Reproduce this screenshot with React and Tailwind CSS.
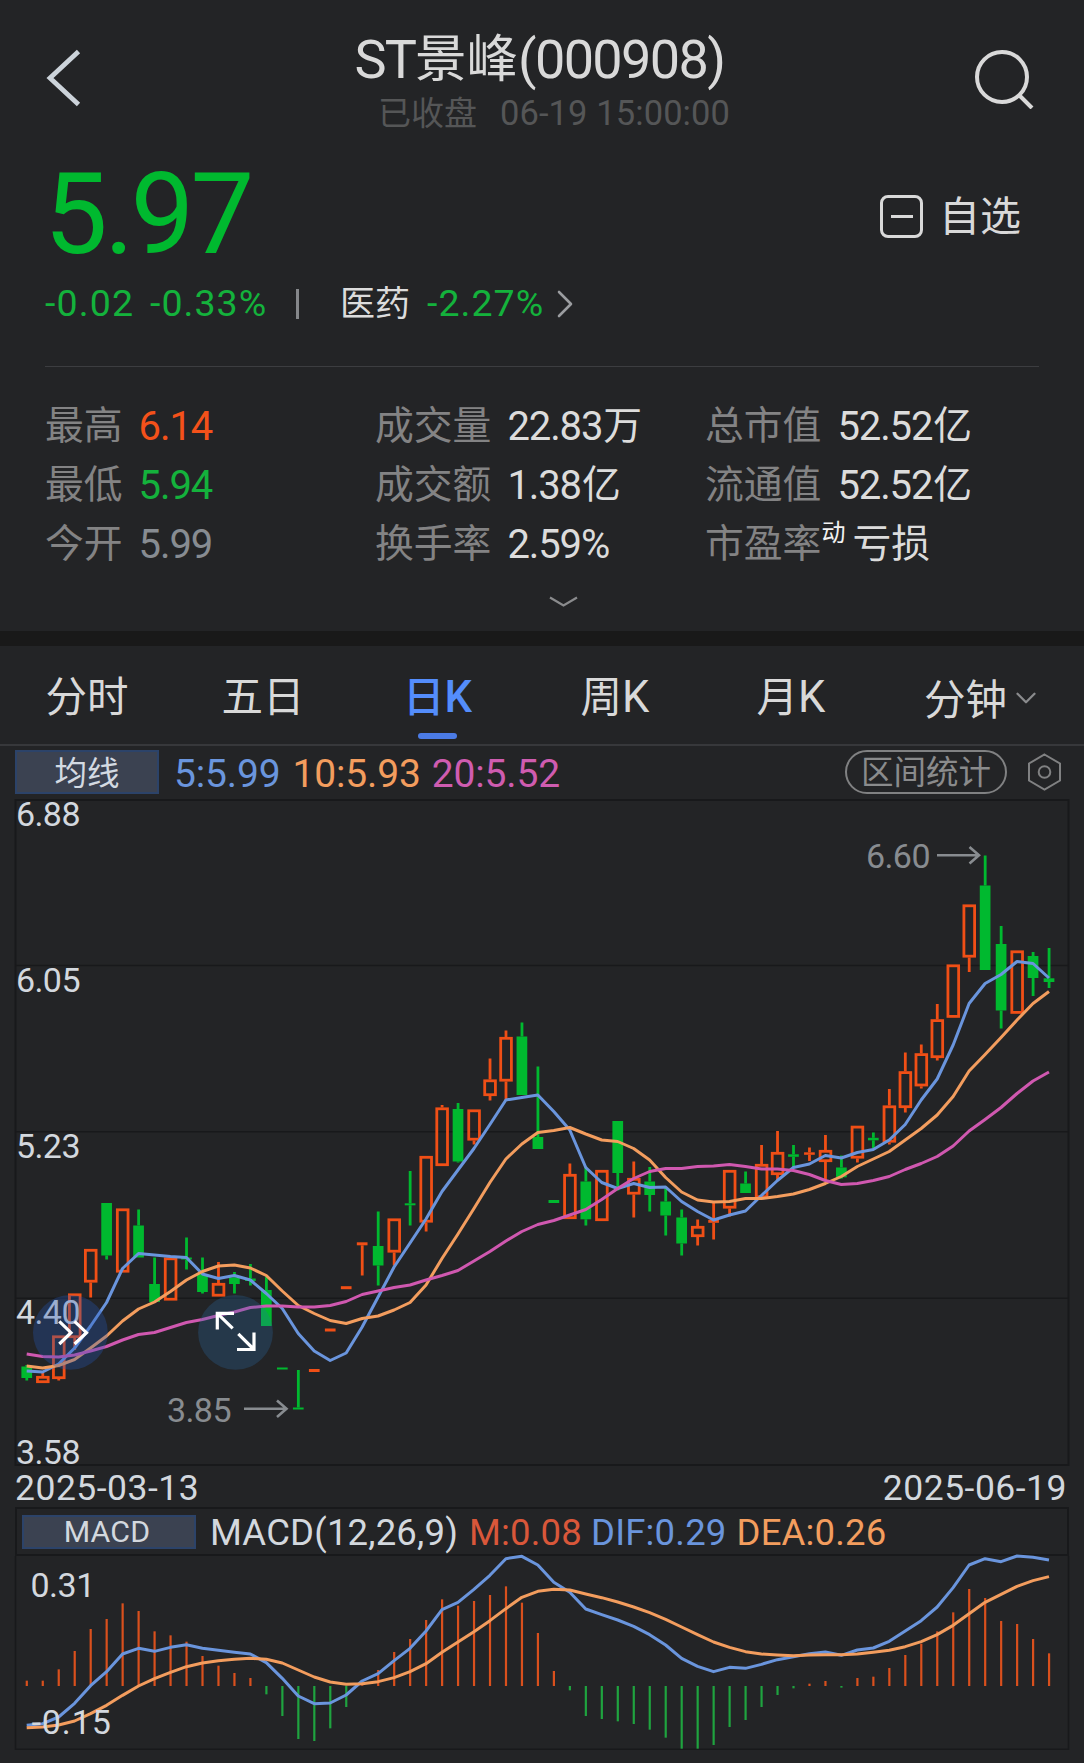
import { ChevronDown, ChevronRight } from "lucide-react";

const UP = "#f04f16";
const DOWN = "#00b92f";
const BLUE = "#6a95dd";
const ORANGE = "#f39d5e";
const PINK = "#d058b0";
const GRID = "#18191b";

// [direction, high, bodyTop, bodyBottom, low]
const candles = [
  ["d", 1365, 1366.5, 1378, 1380.5],
  ["u", 1373, 1376, 1383, 1383],
  ["u", 1335.5, 1335.5, 1379, 1380.5],
  ["u", 1293.5, 1293.5, 1338, 1350],
  ["u", 1249, 1249, 1282.5, 1297.5],
  ["d", 1203, 1203, 1255.5, 1259.5],
  ["u", 1208.5, 1208.5, 1272.5, 1272.5],
  ["d", 1209.5, 1225.5, 1257.5, 1257.5],
  ["d", 1257.5, 1284, 1302, 1302],
  ["u", 1257.5, 1257.5, 1300.5, 1300.5],
  ["d", 1237.5, 1257.5, 1259.5, 1269.5],
  ["d", 1257.5, 1274, 1292, 1293.5],
  ["u", 1262, 1283, 1296.5, 1296.5],
  ["d", 1272, 1277.5, 1284, 1293.5],
  ["d", 1264, 1278.5, 1281, 1285.5],
  ["d", 1276.5, 1290, 1326, 1326],
  ["d", 1367.5, 1367.5, 1369.5, 1369.5],
  ["d", 1370, 1407.5, 1409.5, 1409.5],
  ["u", 1369, 1369, 1372, 1372],
  ["u", 1328.5, 1328.5, 1331.5, 1331.5],
  ["u", 1286.2, 1286.2, 1289.2, 1289.2],
  ["u", 1242.3, 1242.3, 1245.3, 1275.5],
  ["d", 1211.5, 1246, 1265.5, 1285.5],
  ["u", 1218.5, 1218.5, 1252.5, 1265.5],
  ["d", 1171, 1203.3, 1205.3, 1225.5],
  ["u", 1156, 1156, 1222.5, 1231.5],
  ["u", 1105, 1107.5, 1166, 1166],
  ["d", 1103, 1109, 1161.5, 1162.5],
  ["u", 1109.5, 1109.5, 1140.5, 1144.5],
  ["u", 1058.5, 1079.5, 1096, 1100.5],
  ["u", 1030.5, 1037, 1081.5, 1100],
  ["d", 1022.5, 1036.5, 1095, 1095],
  ["d", 1066.5, 1137, 1149, 1149],
  ["d", 1200, 1200, 1203, 1203],
  ["u", 1163.5, 1174, 1219, 1219],
  ["d", 1166.5, 1181.5, 1219.3, 1225.5],
  ["u", 1170, 1170, 1221, 1221],
  ["d", 1121, 1121, 1173, 1190.5],
  ["u", 1161.5, 1178, 1194.5, 1217.5],
  ["d", 1167, 1181.5, 1195, 1211.5],
  ["d", 1187.5, 1201.5, 1215.5, 1235.5],
  ["d", 1209.5, 1217.5, 1243.5, 1255.5],
  ["u", 1219.5, 1226, 1237, 1245.5],
  ["u", 1202.5, 1219.8, 1222.8, 1239.5],
  ["u", 1170, 1170, 1208.5, 1216.5],
  ["d", 1171.5, 1183.5, 1193, 1193],
  ["u", 1145, 1164, 1198, 1198],
  ["u", 1131, 1152, 1175, 1180],
  ["d", 1145, 1154.3, 1156.8, 1168.5],
  ["u", 1147.5, 1152.3, 1154.8, 1161],
  ["u", 1135, 1150, 1162, 1181],
  ["d", 1155.5, 1167.5, 1177.3, 1178.5],
  ["u", 1125.8, 1125.8, 1158.5, 1162.5],
  ["d", 1132.5, 1137.8, 1140.3, 1148.5],
  ["u", 1089, 1105.5, 1142.5, 1144.5],
  ["u", 1052.5, 1071.3, 1108, 1112.5],
  ["u", 1044.5, 1053.3, 1086.3, 1088.5],
  ["u", 1004, 1019.3, 1058, 1060.5],
  ["u", 964.5, 964.5, 1017.7, 1017.7],
  ["u", 904.5, 904.5, 957.5, 972],
  ["d", 855.5, 885.5, 970, 970],
  ["d", 926, 944, 1010.5, 1028.5],
  ["u", 950.5, 950.5, 1013.7, 1013.7],
  ["d", 952, 956, 978, 996],
  ["d", 948, 978.3, 982, 988],
];

const ma5 = [
  1371, 1372, 1364, 1348, 1326, 1302.5, 1268.5, 1253.5, 1255, 1256.5, 1257.5,
  1274, 1278.5, 1275.5, 1280, 1293.5, 1308.5, 1333.5, 1351, 1360.5, 1353, 1327,
  1297, 1267, 1243, 1219, 1191.5, 1170, 1148.5, 1124.5, 1100, 1097.5, 1095,
  1111.5, 1130, 1167.5, 1182.5, 1188.5, 1183.5, 1187.5, 1187, 1201.5, 1211.5,
  1220, 1215, 1211, 1195.5, 1180.5, 1167.5, 1164, 1155.5, 1158, 1152.5, 1149.5,
  1140, 1124.5, 1100, 1079, 1045, 1003.5, 983.5, 974.5, 961.5, 963.5, 978,
];

const ma10 = [
  1366, 1368, 1365.5, 1359.5, 1348, 1336, 1321, 1309, 1302, 1291.5, 1280,
  1271.5, 1266, 1265, 1268, 1275.5, 1291, 1305.5, 1313.5, 1320.5, 1323.5,
  1318.5, 1316, 1310, 1302.5, 1285, 1258.5, 1234, 1208.5, 1182.5, 1159, 1144,
  1132.5, 1130.5, 1127.5, 1134, 1140, 1141.5, 1148.5, 1160, 1177.5, 1192, 1200,
  1202, 1201.5, 1198.5, 1198.5, 1196.5, 1194, 1189.5, 1183.5, 1176.5, 1166.5,
  1159, 1151.5, 1140, 1128.5, 1115, 1096.5, 1071, 1054.5, 1037.5, 1020, 1003.5,
  991.5,
];

const ma20 = [
  1354, 1356.5, 1357, 1355, 1351, 1346.5, 1340, 1334.5, 1332.5, 1327.5, 1322.5,
  1319.5, 1315.5, 1312, 1307.5, 1306, 1306, 1307, 1307, 1305.5, 1301.5, 1294.5,
  1291, 1287.5, 1285, 1280, 1275.5, 1270.5, 1261, 1251.5, 1241, 1231.5, 1224.5,
  1220.5, 1215, 1209.5, 1199.5, 1188.5, 1178.5, 1171.5, 1168.5, 1168.5, 1166.5,
  1166, 1164.5, 1166.5, 1169, 1169, 1170.5, 1174.5, 1180.5, 1184.5, 1183.5,
  1180.5, 1176.5, 1169.5, 1163.5, 1156.5, 1146, 1131, 1119.5, 1107.5, 1093.5,
  1081, 1072,
];

// MACD series are stored in thirds of a pixel
const ZERO = 678;
const bars = [
  662, 662, 628, 573, 507, 477, 430, 453, 514, 526, 545, 588, 617, 639, 654,
  703, 768, 837, 843, 805, 741, 676, 630, 576, 537, 480, 418, 437, 423, 405,
  379, 428, 519, 633, 691, 768, 777, 784, 792, 809, 833, 866, 866, 855, 801,
  780, 741, 705, 685, 671, 663, 683, 654, 650, 624, 585, 551, 514, 457, 387,
  414, 483, 492, 537, 580,
];

const dif = [
  796, 791, 771, 730, 677, 635, 582, 565, 574, 562, 554, 565, 571, 577, 582,
  608, 655, 708, 731, 729, 705, 663, 641, 602, 565, 513, 449, 427, 388, 346,
  296, 289, 315, 367, 397, 447, 464, 480, 499, 524, 555, 595, 619, 635, 622,
  625, 613, 599, 590, 581, 576, 586, 570, 564, 544, 513, 482, 441, 383, 315,
  296, 305, 288, 292, 300,
];

const dea = [
  803, 801, 795, 783, 761, 736, 706, 678, 656, 637, 620, 609, 602, 598, 595,
  598, 609, 630, 651, 666, 673, 671, 665, 653, 635, 611, 577, 546, 515, 482,
  446, 412, 394, 388, 390, 402, 413, 426, 441, 458, 478, 501, 524, 546, 562,
  575, 582, 585, 587, 585, 584, 584, 582, 577, 571, 560, 545, 524, 496, 461,
  427, 403, 379, 362, 350,
];

const stats = [
  { label: "最高", value: "6.14", color: "text-[#f4511a]" },
  { label: "成交量", value: "22.83", unit: "万" },
  { label: "总市值", value: "52.52", unit: "亿" },
  { label: "最低", value: "5.94", color: "text-[#14b23c]" },
  { label: "成交额", value: "1.38", unit: "亿" },
  { label: "流通值", value: "52.52", unit: "亿" },
  { label: "今开", value: "5.99", color: "text-[#878c92]" },
  { label: "换手率", value: "2.59%" },
  { label: "市盈率", sup: "动", unit: "亏损" },
];

const tabs = [
  { name: "分时" },
  { name: "五日" },
  { name: "日", latin: "K", active: true },
  { name: "周", latin: "K" },
  { name: "月", latin: "K" },
  { name: "分钟", more: true },
];

const px = (i) => 26.7 + 15.973 * i;
const line = (values) => values.map((y, i) => `${px(i)},${y}`).join(" ");
const macdY = (v) => 1460 + v / 3;

function Candle({ index, data }) {
  const [dir, high, top, bottom, low] = data;
  const x = px(index);
  const color = dir === "u" ? UP : DOWN;
  const hollow = dir === "u" && bottom - top > 4;

  return (
    <g fill={color} stroke="none">
      {high < top && <rect x={x - 1.3} y={high} width={2.8} height={top - high} />}
      {low > bottom && <rect x={x - 1.3} y={bottom} width={2.8} height={low - bottom} />}
      {hollow ? (
        <rect
          x={x - 5.2}
          y={top + 1.3}
          width={10.7}
          height={bottom - top - 2.6}
          fill="none"
          stroke={color}
          strokeWidth={2.8}
        />
      ) : (
        <rect x={x - 5.3} y={top} width={10.7} height={bottom - top} />
      )}
    </g>
  );
}

function Header() {
  return (
    <header className="grid h-[156px] grid-cols-[1fr_auto_1fr] items-center pr-[49px] pl-[44px]">
      <svg className="h-[60px] w-[40px]" viewBox="0 0 40 60" fill="none" stroke="#ccd3da" strokeWidth="4.8">
        <path d="M34.5 3.5 L6 30 L34.5 56.5" />
      </svg>
      <div className="flex h-full flex-col items-center pt-[30px]">
        <h1 className="flex h-[60px] items-center text-[51.5px] text-[#d9d9d9]">
          <span className="text-[54px] tracking-[-0.035em]">ST</span>景峰
          <span className="text-[54px] tracking-[-0.03em]">(000908)</span>
        </h1>
        <p className="ml-[29px] flex h-[46px] items-center text-[33px] text-[#555657]">
          已收盘
          <span className="ml-[23px] text-[34.5px] tracking-[0.003em]">06-19 15:00:00</span>
        </p>
      </div>
      <svg className="h-[62px] w-[62px] justify-self-end" viewBox="0 0 62 62" fill="none" stroke="#d9d9d9" strokeWidth="4">
        <circle cx="29" cy="30" r="25" />
        <path d="M46 48 L59 61" />
      </svg>
    </header>
  );
}

function Quote() {
  return (
    <section className="px-[45px]">
      <div className="flex h-[115px] items-center justify-between">
        <span className="mt-[3px] -ml-px text-[113.5px] leading-none tracking-[-0.032em] text-[#00b92f]">5.97</span>
        <div className="flex items-center pt-[5px] pr-[18px] text-[41px] leading-none text-[#d9d9d9]">
          <span className="mr-[16px] flex size-[43px] items-center justify-center rounded-[8px] border-[3px] border-[#d9d9d9]">
            <i className="h-[3px] w-[22px] bg-[#d9d9d9]" />
          </span>
          <span className="pt-[2px]">自选</span>
        </div>
      </div>
      <div className="flex h-[64px] items-center pt-[2px] text-[37.5px] text-[#14b23c]">
        <span className="w-[105px] tracking-[0.03em]">-0.02</span>
        <span className="w-[146px] tracking-[0.028em]">-0.33%</span>
        <i className="h-[30px] w-[3px] bg-[#85878a]" />
        <span className="ml-[41px] text-[35px] text-[#dcdcdc]">医药</span>
        <span className="ml-[17px] tracking-[0.028em]">-2.27%</span>
        <ChevronRight className="-ml-[3px] size-[48px] text-[#9b9da0]" strokeWidth={1.3} />
      </div>
      <div className="mt-[31px] border-t border-[#3c3d40]" />
      <div className="mt-[30px] mb-[-2px] grid grid-cols-[330px_330px_1fr]">
        {stats.map((item) => (
          <div key={item.label} className="flex h-[59px] items-center text-[38.8px] text-[#dcdcdc]">
            <span className="text-[#838384]">{item.label}</span>
            {item.sup && <sup className="top-[-12px] text-[24px] leading-none text-[#f2f2f2]">{item.sup}</sup>}
            {item.value && (
              <span className={`ml-[16px] text-[40px] tracking-[-0.028em] ${item.color || ""}`}>
                {item.value}
              </span>
            )}
            <span className={item.sup ? "ml-[7px]" : "ml-px"}>{item.unit}</span>
          </div>
        ))}
      </div>
      <div className="flex h-[59px] items-center justify-center pt-px">
        <svg className="ml-[43px] h-[12px] w-[29px]" viewBox="0 0 29 12" fill="none" stroke="#8a8b8d" strokeWidth="2.2">
          <path d="M1 1.5 L14.5 9.5 L28 1.5" />
        </svg>
      </div>
    </section>
  );
}

function Tabs() {
  return (
    <nav className="h-[100px] border-b-2 border-[#37383b]">
      <div className="-ml-px grid h-full w-[1056px] grid-cols-6 text-[41.5px] text-[#d9d9d9]">
        {tabs.map((tab) => (
          <div key={tab.name} className="relative flex items-center justify-center pt-[5px]">
            <span className={tab.active ? "-ml-[3px] font-medium text-[#548dfb]" : tab.more ? "mt-[6px] ml-[-3px]" : ""}>
              {tab.name}
              {tab.latin && <span className="text-[43.5px]">{tab.latin}</span>}
            </span>
            {tab.active && (
              <i className="absolute bottom-[5px] left-[67px] h-[6px] w-[39px] rounded-[3px] bg-[#4b7be5]" />
            )}
            {tab.more && (
              <ChevronDown className="absolute left-[130px] size-[34px] text-[#8a8b8d]" strokeWidth={1.6} />
            )}
          </div>
        ))}
      </div>
    </nav>
  );
}

function AverageBar() {
  return (
    <div className="flex h-[53px] items-center pr-[22px] pb-px pl-[15px] text-[39px] tracking-[-0.004em]">
      <span className="flex h-[44px] w-[144px] items-center justify-center border-2 border-[#2c4369] bg-[#3b4251] pt-[4px] text-[32.5px] tracking-normal text-[#d3dae2]">
        均线
      </span>
      <span className="ml-[15px] pt-[5px] text-[#6a95dd]">5:5.99</span>
      <span className="ml-[12px] pt-[5px] text-[#f39d5e]">10:5.93</span>
      <span className="ml-[11px] pt-[5px] text-[#cf5cb0]">20:5.52</span>
      <span className="ml-auto flex h-[44px] w-[162px] items-center justify-center rounded-full border-2 border-[#808182] pt-[3px] text-[32.5px] tracking-normal text-[#8a8b8c]">
        区间统计
      </span>
      <svg className="ml-[20px] h-[38px] w-[35px]" viewBox="0 0 35 38" fill="none" stroke="#808182" strokeWidth="2">
        <path d="M17.5 1.5 L33 10.5 V27.5 L17.5 36.5 L2 27.5 V10.5 Z" />
        <circle cx="17.5" cy="19" r="5.8" />
      </svg>
    </div>
  );
}

function KLineChart() {
  return (
    <svg className="block h-[667px] w-[1084px] overflow-visible" viewBox="0 799 1084 667" fill="none">
      <g stroke={GRID} strokeWidth="2">
        <rect x="15.5" y="800" width="1053" height="665" />
        <path d="M15.5 965.5 H1068.5 M15.5 1131.7 H1068.5 M15.5 1298.3 H1068.5" strokeWidth="1.6" />
      </g>
      {candles.map((data, i) => (
        <Candle key={i} index={i} data={data} />
      ))}
      <g strokeWidth="3" strokeLinejoin="round">
        <polyline points={line(ma5)} stroke={BLUE} />
        <polyline points={line(ma10)} stroke={ORANGE} />
        <polyline points={line(ma20)} stroke={PINK} />
      </g>
      <g fill="#d3d8de" fontSize="34" letterSpacing="-0.6">
        <text x="16" y="826">6.88</text>
        <text x="16" y="992">6.05</text>
        <text x="16" y="1158">5.23</text>
        <text x="16" y="1323.5">4.40</text>
        <text x="16" y="1464">3.58</text>
      </g>
      <g fill="#888c90" fontSize="34" letterSpacing="-0.6">
        <text x="866" y="868">6.60</text>
        <text x="167" y="1422">3.85</text>
      </g>
      <g stroke="#888c90" strokeWidth="2.6">
        <path d="M937 855.3 H979 M969.5 847 L979 855.3 L969.5 863.6" />
        <path d="M244 1408.7 H287 M277 1400.4 L286.5 1408.7 L277 1417" />
      </g>
      <circle cx="70.4" cy="1332.4" r="37.4" fill="#2458b8" fillOpacity="0.32" />
      <circle cx="235.5" cy="1332.4" r="37.4" fill="#2b6ca8" fillOpacity="0.28" />
      <g stroke="#fff" strokeWidth="3.2">
        <path d="M59.3 1321.3 L71 1332.7 L59.3 1344 M74.5 1321.3 L86.5 1332.7 L74.5 1344" />
        <path d="M217.3 1329.5 V1313.3 H234 M217.3 1313.3 L232.7 1328.3" />
        <path d="M254 1332.5 V1349.5 H237 M254 1349.5 L238.3 1333.8" />
      </g>
    </svg>
  );
}

function MacdPanel() {
  return (
    <>
      <div className="mx-[15px] flex h-[49px] w-[1054px] items-center border-2 border-[#18191b] pl-[5px] text-[36.5px] tracking-[0.005em]">
        <span className="flex h-[34px] w-[174px] items-center justify-center border-2 border-[#2c4369] bg-[#3b4251] pt-px pr-[4px] text-[30.3px] text-[#d3d8de]">
          MACD
        </span>
        <span className="ml-[14px] pt-[4px] text-[#d3d8de]">MACD(12,26,9)</span>
        <span className="ml-[11px] pt-[4px] text-[#d9573a]">M:0.08</span>
        <span className="ml-[9px] pt-[4px] text-[#6a95dd]">DIF:0.29</span>
        <span className="ml-[10px] pt-[4px] text-[#f39d5e]">DEA:0.26</span>
      </div>
      <svg className="block h-[194px] w-[1084px] overflow-visible" viewBox="0 1556 1084 194" fill="none">
        <path d="M15.5 1556 V1749.3 H1068.5 V1556" stroke={GRID} strokeWidth="1.6" />
        {bars.map((v, i) => (
          <rect
            key={i}
            x={px(i) - 1}
            y={macdY(Math.min(v, ZERO))}
            width="2.2"
            height={Math.abs(v - ZERO) / 3}
            fill={v < ZERO ? "#d9501d" : "#1fa33f"}
          />
        ))}
        <g strokeWidth="3" strokeLinejoin="round">
          <polyline points={line(dif.map(macdY))} stroke={BLUE} />
          <polyline points={line(dea.map(macdY))} stroke={ORANGE} />
        </g>
        <g fill="#d3d8de" fontSize="34">
          <text x="30.5" y="1597" letterSpacing="-0.5">0.31</text>
          <text x="31.5" y="1734" letterSpacing="0.9">-0.15</text>
        </g>
      </svg>
    </>
  );
}

export default function App() {
  return (
    <div className="h-[1763px] w-[1084px] overflow-hidden bg-[#232426] leading-none whitespace-nowrap [font-family:Roboto,'Noto_Sans_CJK_SC',sans-serif]">
      <Header />
      <Quote />
      <div className="h-[15px] bg-[#191919]" />
      <Tabs />
      <AverageBar />
      <KLineChart />
      <div className="flex h-[41px] items-center justify-between pt-[4px] pr-[17px] pl-[15px] text-[35.5px] tracking-[0.014em] text-[#d3d8de]">
        <span>2025-03-13</span>
        <span>2025-06-19</span>
      </div>
      <MacdPanel />
    </div>
  );
}
